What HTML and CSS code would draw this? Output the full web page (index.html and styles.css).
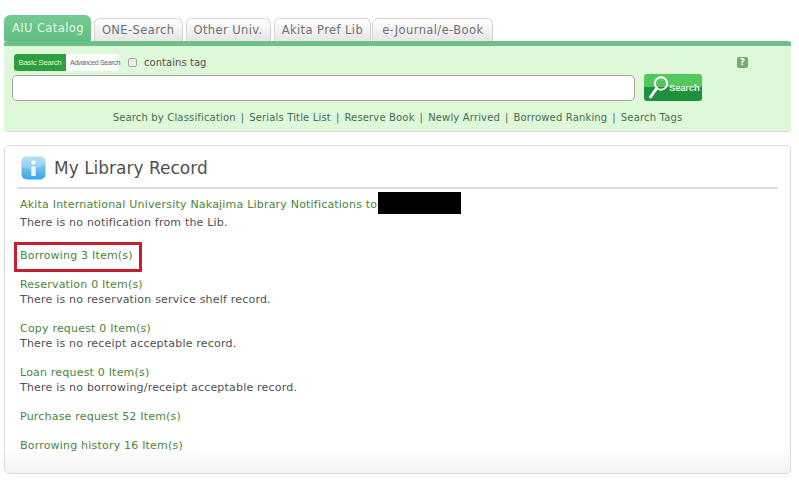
FILE: index.html
```html
<!DOCTYPE html>
<html lang="en">
<head>
  <meta charset="UTF-8" />
  <title>My Library Record</title>
  <link rel="stylesheet" href="styles.css">
</head>
<body>

<!-- Search tabs -->
<ul class="tabs">
  <li class="tab active">AIU Catalog</li>
  <li class="tab">ONE-Search</li>
  <li class="tab">Other Univ.</li>
  <li class="tab">Akita Pref Lib</li>
  <li class="tab">e-Journal/e-Book</li>
</ul>

<div class="search-panel">
  <div class="search-options">
    <div class="mode-switch">
      <span class="mode on">Basic Search</span>
      <span class="mode">Advanced Search</span>
    </div>
    <span class="tag-check"></span>
    <span class="tag-label">contains tag</span>
    <span class="help-icon">?</span>
  </div>
  <div class="search-row">
    <div class="search-input"></div>
    <div class="search-btn">
      <svg width="25" height="27" viewBox="0 0 25 27">
        <circle cx="17" cy="9.5" r="6.2" fill="none" stroke="#fff" stroke-width="2"/>
        <path d="M12.5 14.5 L6.5 23" stroke="#fff" stroke-width="3" stroke-linecap="round"/>
      </svg>
      <span>Search</span>
    </div>
  </div>
  <div class="search-links">
    <a>Search by Classification</a><i>|</i><a>Serials Title List</a><i>|</i><a>Reserve Book</a><i>|</i><a>Newly Arrived</a><i>|</i><a>Borrowed Ranking</a><i>|</i><a>Search Tags</a>
  </div>
</div>

<!-- Record -->
<div class="record-panel">
  <div class="record-title">
    <svg class="info-icon" width="25" height="24" viewBox="0 0 25 24">
      <defs>
        <linearGradient id="infoBg" x1="0" y1="0" x2="0" y2="1">
          <stop offset="0" stop-color="#a8d8ee"/>
          <stop offset="1" stop-color="#39a6e6"/>
        </linearGradient>
      </defs>
      <rect x="0.5" y="0.5" width="24" height="23" rx="5" fill="url(#infoBg)"/>
      <path d="M1 11 Q12 16 24 8 V5 Q24 1 20 1 H5 Q1 1 1 5 Z" fill="#fff" fill-opacity="0.22"/>
      <circle cx="12.5" cy="6.5" r="2.3" fill="#fff" fill-opacity="0.9"/>
      <path d="M10.3 10.5 H14.7 V20 H10.3 Z" fill="#fff" fill-opacity="0.9"/>
    </svg>
    <h2>My Library Record</h2>
  </div>

  <div class="record-group first">
    <div class="line-top"><a>Akita International University Nakajima Library Notifications to</a><span class="redacted"></span></div>
    <p>There is no notification from the Lib.</p>
  </div>
  <div class="record-group boxed">
    <a>Borrowing 3 Item(s)</a>
  </div>
  <div class="record-group">
    <a>Reservation 0 Item(s)</a>
    <p>There is no reservation service shelf record.</p>
  </div>
  <div class="record-group">
    <a>Copy request 0 Item(s)</a>
    <p>There is no receipt acceptable record.</p>
  </div>
  <div class="record-group">
    <a>Loan request 0 Item(s)</a>
    <p>There is no borrowing/receipt acceptable record.</p>
  </div>
  <div class="record-group">
    <a>Purchase request 52 Item(s)</a>
  </div>
  <div class="record-group">
    <a>Borrowing history 16 Item(s)</a>
  </div>
</div>

</body>
</html>
```

FILE: styles.css
```css
body {
  font-family: "DejaVu Sans", Verdana, sans-serif;
  font-size: 11px;
  letter-spacing: 0.2px;
  margin: 0;
  padding: 16px 8px 0 4px;
  background: #fff;
  color: #505050;
}

a {
  color: #47873a;
}

/* tabs */
.tabs {
  display: flex;
  align-items: flex-end;
  gap: 3px;
  list-style: none;
  margin: 0;
  padding: 0;
  height: 25px;
}

.tab {
  height: 22px;
  line-height: 23px;
  padding: 0 7px;
  border: 1px solid #d4d4d4;
  border-bottom: none;
  border-radius: 6px 6px 0 0;
  background: linear-gradient(to bottom, #fff, #e6e6e6);
  color: #707070;
  font-size: 11.5px;
  letter-spacing: 0.4px;
}

.tab:last-child {
  margin-left: -2px;
  padding: 0 9px;
}

.tab.active {
  height: 26px;
  line-height: 27px;
  padding: 0 7px 0 8px;
  border: none;
  background: linear-gradient(to bottom, #74cb93, #62bd84);
  color: #e6f7e6;
}

/* search panel */
.search-panel {
  height: 85px;
  background: #dff8da;
  border-top: 5px solid #6cc08a;
  border-bottom: 1px solid #d5dfd2;
  border-radius: 3px;
}

.search-options {
  display: flex;
  align-items: center;
  padding: 8px 0 0 10px;
  height: 17px;
}

.mode-switch {
  display: flex;
  width: 105px;
  height: 17px;
  border-radius: 3px;
  background: #fff;
  font-family: "Liberation Sans", Arial, sans-serif;
  font-size: 8px;
  line-height: 18px;
  text-align: center;
  color: #666;
}

.mode {
  white-space: nowrap;
  letter-spacing: -0.35px;
}

.mode.on {
  flex: none;
  width: 52px;
  background: #2f9e3f;
  color: #d8f5d8;
  border-radius: 3px 0 0 3px;
}

.mode:last-child {
  flex: 1;
  padding-left: 4px;
  font-size: 7px;
  letter-spacing: -0.35px;
  text-align: left;
}

.tag-check {
  width: 7px;
  height: 7px;
  margin-left: 9px;
  border: 1px solid #aaa;
  border-radius: 2px;
  background: #eee;
}

.tag-label {
  margin-left: 7px;
  font-size: 10px;
  letter-spacing: 0.05px;
}

.help-icon {
  width: 11px;
  height: 11px;
  margin-left: auto;
  margin-right: 43px;
  border-radius: 2px;
  background: #6fae6f;
  color: #fff;
  font-size: 9px;
  font-weight: bold;
  line-height: 11px;
  text-align: center;
}

.search-row {
  display: flex;
  align-items: center;
  gap: 9px;
  padding: 3px 0 0 8px;
}

.search-input {
  width: 621px;
  height: 24px;
  background: #fff;
  border: 1px solid #9aa896;
  border-radius: 5px;
}

.search-btn {
  display: flex;
  align-items: center;
  width: 58px;
  height: 27px;
  border-radius: 3px;
  background: linear-gradient(to bottom, #52c85e 50%, #1f8f3c 50%);
  color: #e8fbe8;
  font-family: "Liberation Sans", Arial, sans-serif;
  font-size: 9.5px;
  font-weight: bold;
  letter-spacing: -0.2px;
}

.search-links {
  padding-top: 11px;
  text-align: center;
  font-size: 10px;
  letter-spacing: 0.16px;
  color: #3f6f4f;
}

.search-links a {
  color: #3f6f4f;
}

.search-links i {
  font-style: normal;
  margin: 0 5px;
}

/* record panel */
.record-panel {
  margin-top: 13px;
  height: 327px;
  padding: 0 12px;
  border: 1px solid #ddd;
  border-radius: 5px;
  background: linear-gradient(to bottom, #fff 92%, #f2f2f2);
}

.record-title {
  display: flex;
  align-items: center;
  box-sizing: border-box;
  height: 43px;
  padding: 3px 0 0 4px;
  border-bottom: 2px solid #ddd;
}

.record-title h2 {
  margin: 0 0 0 8px;
  font-size: 17px;
  font-weight: normal;
  letter-spacing: 0;
  color: #505050;
}

.record-group {
  margin: 0 0 14px 3px;
  line-height: 15px;
}

.record-group p {
  margin: 0;
}

.record-group.first {
  margin-top: 4px;
  margin-bottom: 12px;
}

.line-top {
  display: flex;
  align-items: center;
  height: 22px;
}

.redacted {
  width: 83px;
  height: 22px;
  margin: 0 0 2px 1px;
  background: #000;
}

.boxed {
  display: inline-block;
  width: 128px;
  height: 30px;
  box-sizing: border-box;
  border: 3px solid #c3202e;
  margin: 0 0 5px -3px;
  padding: 3px 0 0 3px;
}
```
